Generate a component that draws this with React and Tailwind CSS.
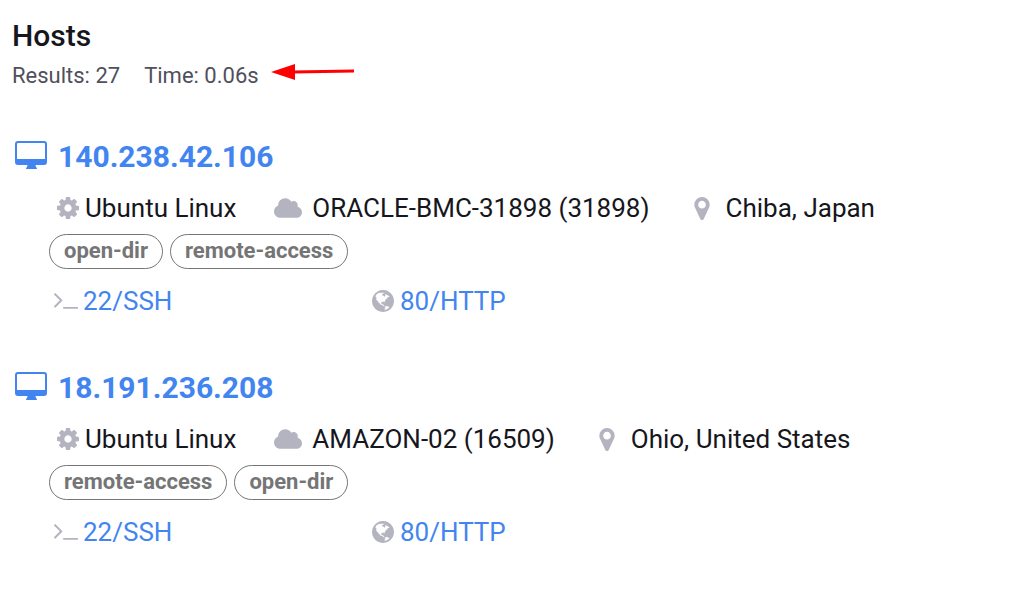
import { FaCloud } from 'react-icons/fa'

const HOSTS = [
  {
    ip: '140.238.42.106',
    os: 'Ubuntu Linux',
    network: 'ORACLE-BMC-31898 (31898)',
    location: 'Chiba, Japan',
    labels: ['open-dir', 'remote-access'],
  },
  {
    ip: '18.191.236.208',
    os: 'Ubuntu Linux',
    network: 'AMAZON-02 (16509)',
    location: 'Ohio, United States',
    labels: ['remote-access', 'open-dir'],
  },
]

function DesktopIcon() {
  return (
    <svg viewBox="0 0 32 28" className="w-8 h-7 -mt-1 shrink-0" fill="currentColor" aria-hidden="true">
      <path fillRule="evenodd" d="M3 0h26a3 3 0 0 1 3 3v18a3 3 0 0 1-3 3h-8.500l.5 2q1 .5 1 2H11q0-1.500 1-2l.5-2H3a3 3 0 0 1-3-3V3a3 3 0 0 1 3-3zM3 2q-1 0-1 1v15h28V3q0-1-1-1z" />
    </svg>
  )
}

function CogIcon() {
  return (
    <svg viewBox="128 128 1536 1536" className="size-[22px] shrink-0 text-[#b4b4c0]" fill="currentColor" aria-hidden="true">
      <path d="M1152 896q0-106-75-181t-181-75-181 75-75 181 75 181 181 75 181-75 75-181zm512-109v222q0 12-8 23t-20 13l-185 28q-19 54-39 91 35 50 107 138 10 12 10 25t-9 23q-27 37-99 108t-94 71q-12 0-26-9l-138-108q-44 23-91 38-16 136-29 186-7 28-36 28h-222q-14 0-24.500-8.500t-11.500-21.500l-28-184q-49-16-90-37l-141 107q-10 9-25 9-14 0-25-11-126-114-165-168-7-10-7-23 0-12 8-23 15-21 51-66.500t54-70.500q-27-50-41-99l-183-27q-13-2-21-12.500t-8-23.500v-222q0-12 8-23t19-13l186-28q14-46 39-92-40-57-107-138-10-12-10-24 0-10 9-23 26-36 98.500-107.500t94.500-71.500q13 0 26 10l138 107q44-23 91-38 16-136 29-186 7-28 36-28h222q14 0 24.500 8.500t11.500 21.500l28 184q49 16 90 37l142-107q9-9 24-9 13 0 25 10 129 119 165 170 7 8 7 22 0 12-8 23-15 21-51 66.500t-54 70.500q26 50 41 98l183 28q13 2 21 12.500t8 23.500z" />
    </svg>
  )
}

function MarkerIcon() {
  return (
    <svg viewBox="384 128 1024 1536" className="w-4 h-[23px] shrink-0 text-[#b4b4c0]" fill="currentColor" aria-hidden="true">
      <path d="M1152 640q0-106-75-181t-181-75-181 75-75 181 75 181 181 75 181-75 75-181zm256 0q0 109-33 179l-364 774q-16 33-47.500 52t-67.500 19-67.500-19-46.500-52l-365-774q-33-70-33-179 0-212 150-362t362-150 362 150 150 362z" />
    </svg>
  )
}

function TerminalIcon() {
  return (
    <svg viewBox="77 470 1651 1066" className="w-6 h-4 shrink-0 text-[#b4b4c0]" fill="currentColor" aria-hidden="true">
      <path d="M649 983l-466 466q-10 10-23 10t-23-10l-50-50q-10-10-10-23t10-23l393-393-393-393q-10-10-10-23t10-23l50-50q10-10 23-10t23 10l466 466q10 10 10 23t-10 23zm1079 457v64q0 14-9 23t-23 9h-960q-14 0-23-9t-9-23v-64q0-14 9-23t23-9h960q14 0 23 9t9 23z" />
    </svg>
  )
}

function GlobeIcon() {
  return (
    <svg viewBox="128 128 1536 1536" className="size-[22px] shrink-0 text-[#b4b4c0]" fill="currentColor" aria-hidden="true">
      <path d="M896 128q209 0 385.500 103t279.500 279.500 103 385.500-103 385.500-279.500 279.500-385.500 103-385.500-103-279.500-279.500-103-385.500 103-385.500 279.500-279.500 385.500-103zm274 521q-2 1-9.500 9.500t-13.500 9.500q2 0 4.500-5t5-11 3.500-7q6-7 22-15 14-6 52-12 34-8 51 11-2-2 9.500-13t14.500-12q3-2 15-4.500t15-7.500l2-22q-12 1-17.500-7t-6.500-21q0 2-6 8 0-7-4.500-8t-11.500 1-9 1q-10-3-15-7.500t-8-16.500-4-15q-2-5-9.500-11t-9.500-10q-1-2-2.500-5.500t-3-6.500-4-5.500-5.500-2.500-7 5-7.500 10-4.500 5q-3-2-6-1.500t-4.500 1-4.500 3-5 3.500q-3 2-8.500 3t-8.500 2q15-5-1-11-10-4-16-3 9-4 7.500-12t-8.500-14h5q-1-4-8.500-8.500t-17.500-8.500-13-6q-8-5-34-9.500t-33-.5q-5 6-4.500 10.500t4 14 3.500 12.500q1 6-5.500 13t-6.500 12q0 7 14 15.500t10 21.500q-3 8-16 16t-16 12q-5 8-1.500 18.500t10.500 16.500q2 2 1.500 4t-3.500 4.500-5.500 4-6.500 3.500l-3 2q-11 5-20.500-6t-13.500-26q-7-25-16-30-23-8-29 1-5-13-41-26-25-9-58-4 6-1 0-15-7-15-19-12 3-6 4-17.500t1-13.500q3-13 12-23 1-1 7-8.500t9.500-13.500.5-6q35 4 50-11 5-5 11.500-17t10.500-17q9-6 14-5.500t14.500 5.500 14.500 5q14 1 15.500-11t-7.500-20q12 1 3-17-4-7-8-9-12-4-27 5-8 4 2 8-1-1-9.500 10.500t-16.500 17.500-16-5q-1-1-5.500-13.500t-9.500-13.500q-8 0-16 15 3-8-11-15t-24-8q19-12-8-27-7-4-20.500-5t-19.500 4q-5 7-5.500 11.500t5 8 10.500 5.500 11.500 4 8.500 3q14 10 8 14-2 1-8.500 3.500t-11.500 4.500-6 4q-3 4 0 14t-2 14q-5-5-9-17.500t-7-16.500q7 9-25 6l-10-1q-4 0-16 2t-20.500 1-13.500-8q-4-8 0-20 1-4 4-2-4-3-11-9.500t-10-8.500q-46 15-94 41 6 1 12-1 5-2 13-6.500t10-5.500q34-14 42-7l5-5q14 16 20 25-7-4-30-1-20 6-22 12 7 12 5 18-4-3-11.500-10t-14.500-11-15-5q-16 0-22 1-146 80-235 222 7 7 12 8 4 1 5 9t2.500 11 11.500-3q9 8 3 19 1-1 44 27 19 17 21 21 3 11-10 18-1-2-9-9t-9-4q-3 5 .5 18.500t10.500 12.500q-7 0-9.500 16t-2.500 35.500-1 23.500l2 1q-3 12 5.500 34.500t21.500 19.500q-13 3 20 43 6 8 8 9 3 2 12 7.500t15 10 10 10.500q4 5 10 22.500t14 23.500q-2 6 9.500 20t10.500 23q-1 0-2.500 1t-2.500 1q3 7 15.500 14t15.500 13q1 3 2 10t3 11 8 2q2-20-24-62-15-25-17-29-3-5-5.500-15.500t-4.500-14.500q2 0 6 1.500t8.500 3.500 7.500 4 2 3q-3 7 2 17.500t12 18.500 17 19 12 13q6 6 14 19.500t0 13.500q9 0 20 10.500t17 19.500q5 8 8 26t5 24q2 7 8.500 13.500t12.500 9.500l16 8 13 7q5 2 18.500 10.500t21.500 11.500q10 4 16 4t14.500-2.500 13.500-3.500q15-2 29 15t21 21q36 19 55 11-2 1 .5 7.500t8 15.500 9 14.500 5.500 8.500q5 6 18 15t18 15q6-4 7-9-3 8 7 20t18 10q14-3 14-32-31 15-49-18 0-1-2.500-5.500t-4-8.500-2.500-8.500 0-7.500 5-3q9 0 10-3.500t-2-12.500-4-13q-1-8-11-20t-12-15q-5 9-16 8t-16-9q0 1-1.500 5.500t-1.500 6.500q-13 0-15-1 1-3 2.500-17.500t3.500-22.500q1-4 5.500-12t7.500-14.500 4-12.500-4.500-9.500-17.500-2.500q-19 1-26 20-1 3-3 10.500t-5 11.500-9 7q-7 3-24 2t-24-5q-13-8-22.500-29t-9.500-37q0-10 2.500-26.500t3-25-5.500-24.500q3-2 9-9.500t10-10.500q2-1 4.500-1.500t4.500 0 4-1.500 3-6q-1-1-4-3-3-3-4-3 7 3 28.500-1.500t27.500 1.500q15 11 22-2 0-1-2.500-9.500t-.5-13.500q5 27 29 9 3 3 15.500 5t17.500 5q3 2 7 5.500t5.500 4.500 5-.5 8.500-6.500q10 14 12 24 11 40 19 44 7 3 11 2t4.500-9.500 0-14-1.500-12.500l-1-8v-18l-1-8q-15-3-18.500-12t1.500-18.500 15-18.500q1-1 8-3.500t15.500-6.500 12.500-8q21-19 15-35 7 0 11-9-1 0-5-3t-7.500-5-4.500-2q9-5 2-16 5-3 7.500-11t7.500-10q9 12 21 2 8-8 1-16 5-7 20.500-10.500t18.500-9.500q7 2 8-2t1-12 3-12q4-5 15-9t13-5l17-11q3-4 0-4 18 2 31-11 10-11-6-20 3-6-3-9.500t-15-5.500q3-1 11.500-.5t10.500-1.500q15-10-7-16-17-5-43 12zm-163 877q206-36 351-189-3-3-12.500-4.500t-12.500-3.500q-18-7-24-8 1-7-2.500-13t-8-9-12.500-8-11-7q-2-2-7-6t-7-5.500-7.500-4.500-8.500-2-10 1l-3 1q-3 1-5.500 2.500t-5.500 3-4 3 0 2.500q-21-17-36-22-5-1-11-5.500t-10.500-7-10-1.500-11.500 7q-5 5-6 15t-2 13q-7-5 0-17.500t2-18.500q-3-6-10.500-4.500t-12 4.500-11.500 8.500-9 6.500-8.500 5.500-8.500 7.500q-3 4-6 12t-5 11q-2-4-11.500-6.500t-9.500-5.500q2 10 4 35t5 38q7 31-12 48-27 25-29 40-4 22 12 26 0 7-8 20.500t-7 21.500q0 6 2 16z" />
    </svg>
  )
}

function Host({ host }) {
  return (
    <li>
      <h2 className="flex items-center gap-[11px] pl-[3px] text-[30px] leading-9 font-bold text-[#4285f0]">
        <DesktopIcon />
        <a href="#host">{host.ip}</a>
      </h2>
      <div className="pl-[37px]">
        <div className="flex items-center pl-2 mt-[15px] text-[26px] leading-9 text-[#16161d]">
          <span className="flex items-center gap-[6px] mr-[38px]"><CogIcon />{host.os}</span>
          <span className="flex items-center gap-[10px] mr-11">
            <FaCloud size={28} className="shrink-0 text-[#b4b4c0]" />{host.network}
          </span>
          <span className="flex items-center gap-4"><MarkerIcon />{host.location}</span>
        </div>
        <div className="flex gap-[7px] mt-2">
          {host.labels.map(label => (
            <span key={label} className="h-[35px] px-[14px] border border-[#757575] rounded-full text-[22px] leading-8 font-bold text-[#757575]">
              {label}
            </span>
          ))}
        </div>
        <div className="flex mt-[14px] pl-[5px] text-[26px] leading-9 text-[#4285f0]">
          <a href="#ssh" className="flex items-center gap-[5px] w-[318px]"><TerminalIcon />22/SSH</a>
          <a href="#http" className="flex items-center gap-[6px]"><GlobeIcon />80/HTTP</a>
        </div>
      </div>
    </li>
  )
}

export default function App() {
  return (
    <main className="min-h-screen bg-white pl-3 pt-[18px] font-[Roboto,sans-serif]">
      <h1 className="text-[30px] leading-9 font-medium text-[#16161d]">Hosts</h1>
      <div className="flex items-center mt-1 text-[22px] leading-9 text-[#50505c]">
        <span className="mr-6">Results: 27</span>
        <span>Time: 0.06s</span>
        <svg viewBox="0 0 84 16" className="w-[84px] h-4 ml-3 -mt-2 shrink-0" aria-hidden="true">
          <path d="M22 8l61-1" stroke="#f00" strokeWidth="3" />
          <path d="M0 8l24-8v16z" fill="#f00" />
        </svg>
      </div>
      <ul className="mt-[45px] space-y-[51px]">
        {HOSTS.map(host => <Host key={host.ip} host={host} />)}
      </ul>
    </main>
  )
}
